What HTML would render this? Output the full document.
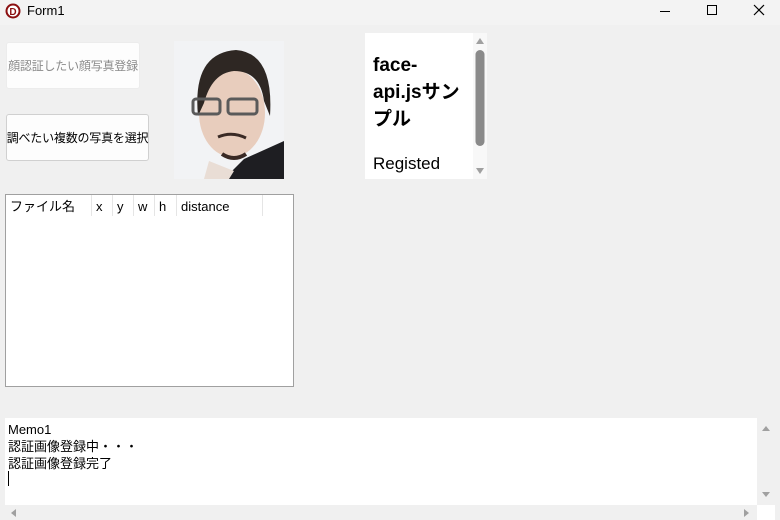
<!DOCTYPE html>
<html><head><meta charset="utf-8"><style>
body{margin:0;width:780px;height:520px;background:#f0f0f0;position:relative;overflow:hidden;font-family:"Liberation Sans","Noto Sans CJK JP",sans-serif;font-size:13px;color:#000}
.a{position:absolute;box-sizing:border-box}
.btn{background:#fdfdfd;border:1px solid #d0d0d0;border-radius:3px;display:flex;align-items:center;justify-content:center;font-size:12px;white-space:nowrap;letter-spacing:-0.2px}
.h span{line-height:15px}
</style></head><body>
<div class="a" style="left:0;top:0;width:780px;height:25px;background:#f3f3f3"></div>
<svg class="a" style="left:5px;top:3px" width="16" height="16"><circle cx="8" cy="8" r="7.5" fill="#8b0f10"/><circle cx="8" cy="8" r="5.5" fill="#fff"/><text x="8" y="12" font-size="10" font-weight="bold" text-anchor="middle" fill="#8b0f10" font-family="Liberation Sans">D</text></svg>
<div class="a" style="left:27px;top:3px;font-size:13px">Form1</div>
<div class="a" style="left:660px;top:11px;width:10px;height:1px;background:#000"></div>
<div class="a" style="left:707px;top:5px;width:10px;height:10px;border:1px solid #000"></div>
<svg class="a" style="left:753px;top:4px" width="12" height="12"><path d="M1 1L11 11M11 1L1 11" stroke="#000" stroke-width="1.2"/></svg>

<div class="a btn" style="left:6px;top:42px;width:134px;height:47px;color:#8a8a8a;border-color:#ececec">顔認証したい顔写真登録</div>
<div class="a btn" style="left:6px;top:114px;width:143px;height:47px">調べたい複数の写真を選択</div>

<svg class="a" style="left:174px;top:41px" width="110" height="138">
<rect width="110" height="138" fill="#f2f3f5"/>
<path d="M50 138 L70 118 L110 100 L110 138Z" fill="#1e1e22"/>
<path d="M35 120 L60 130 L55 138 L30 138Z" fill="#e9ddd5"/>
<ellipse cx="58" cy="72" rx="33" ry="44" fill="#e8cdbd"/>
<path d="M24 75 Q18 12 62 9 Q100 12 96 75 L90 60 Q86 30 60 30 Q38 32 30 62Z" fill="#2e2723"/>
<rect x="19" y="58" width="27" height="15" rx="3" fill="none" stroke="#5a5a5a" stroke-width="3"/>
<rect x="54" y="58" width="29" height="15" rx="3" fill="none" stroke="#5a5a5a" stroke-width="3"/>
<path d="M44 96 Q58 90 72 97" stroke="#3a2a25" stroke-width="3" fill="none"/>
<path d="M48 113 Q60 121 72 113" stroke="#3a2a25" stroke-width="4" fill="none"/>
</svg>

<div class="a" style="left:365px;top:33px;width:122px;height:146px;background:#fff;overflow:hidden">
<div class="a" style="left:8px;top:19px;width:100px;font-size:19px;font-weight:bold;line-height:27px">face-<br>api.jsサン<br>プル</div>
<div class="a" style="left:8px;top:121px;font-size:17px">Registed</div>
<div class="a" style="left:108px;top:0;width:14px;height:146px;background:#f8f8f8"></div>
<svg class="a" style="left:108px;top:0" width="14" height="146"><path d="M3 11L7 5L11 11Z" fill="#a0a0a0"/><rect x="2.5" y="17" width="9" height="96" rx="4.5" fill="#8a8a8a"/><path d="M3 135L7 141L11 135Z" fill="#a0a0a0"/></svg>
</div>

<div class="a" style="left:5px;top:194px;width:289px;height:193px;background:#fff;border:1px solid #a0a0a0"></div>
<div class="a h" style="left:6px;top:195px;width:287px;height:22px;font-size:13px">
<span class="a" style="left:4px;top:4px">ファイル名</span>
<span class="a" style="left:85px;top:0;width:1px;height:21px;background:#e5e5e5"></span>
<span class="a" style="left:90px;top:4px">x</span>
<span class="a" style="left:106px;top:0;width:1px;height:21px;background:#e5e5e5"></span>
<span class="a" style="left:111px;top:4px">y</span>
<span class="a" style="left:127px;top:0;width:1px;height:21px;background:#e5e5e5"></span>
<span class="a" style="left:132px;top:4px">w</span>
<span class="a" style="left:148px;top:0;width:1px;height:21px;background:#e5e5e5"></span>
<span class="a" style="left:153px;top:4px">h</span>
<span class="a" style="left:170px;top:0;width:1px;height:21px;background:#e5e5e5"></span>
<span class="a" style="left:175px;top:4px">distance</span>
<span class="a" style="left:256px;top:0;width:1px;height:21px;background:#e5e5e5"></span>
</div>

<div class="a" style="left:5px;top:418px;width:770px;height:102px;background:#fff"></div>
<div class="a" style="left:8px;top:421px;font-size:13px;line-height:17px">Memo1<br>認証画像登録中・・・<br>認証画像登録完了</div>
<div class="a" style="left:8px;top:471px;width:1px;height:15px;background:#000"></div>
<div class="a" style="left:757px;top:418px;width:18px;height:87px;background:#f0f0f0"></div>
<svg class="a" style="left:757px;top:418px" width="18" height="87"><path d="M5 13L9 8L13 13Z" fill="#a0a0a0"/><path d="M5 74L9 79L13 74Z" fill="#a0a0a0"/></svg>
<div class="a" style="left:5px;top:505px;width:752px;height:15px;background:#f0f0f0"></div>
<svg class="a" style="left:5px;top:505px" width="752" height="15"><path d="M11 4L6 8L11 12Z" fill="#a0a0a0"/><path d="M739 4L744 8L739 12Z" fill="#a0a0a0"/></svg>
</body></html>
